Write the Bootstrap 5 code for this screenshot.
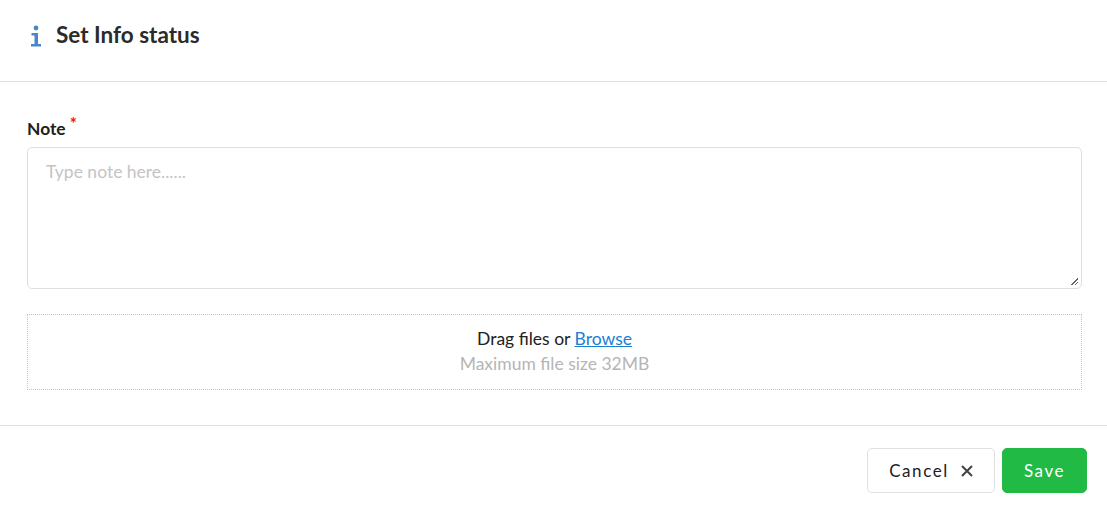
<!DOCTYPE html>
<html lang="en">
<head>
  <meta charset="UTF-8">
  <title>Set Info status</title>
  <link href="https://cdn.jsdelivr.net/npm/bootstrap@5.3.0/dist/css/bootstrap.min.css" rel="stylesheet">
  <style>
    html, body { height: 509px; overflow: hidden; }
    body { font-family: Lato, "Liberation Sans", sans-serif; color: #212121; background: #fff; }
    .dlg-head { height: 82px; padding: 0 27px 10px 30px; border-bottom: 1px solid #e0e0e0; }
    .dlg-head svg { margin-right: 14px; }
    .dlg-title { font-size: 22.5px; font-weight: 700; color: #2b2b2b; line-height: 1; margin: 0; }
    .dlg-body { height: 344px; padding: 36px 25px 0 27px; border-bottom: 1px solid #e0e0e0; }
    .note-label { font-size: 17.4px; font-weight: 700; line-height: 22px; margin: 0 0 7px; display: block; }
    .req-star { color: #f01414; font-size: 17px; position: relative; top: -5px; line-height: 0; }
    .note-input { height: 142px; border: 1px solid #dfdfdf; border-radius: 5px; padding: 13px 18px; font-size: 17.5px; line-height: 22px; color: #212121; display: block; box-shadow: none; }
    .note-input::placeholder { color: #c4c4c4; opacity: 1; }
    .note-input::-webkit-resizer { background: linear-gradient(135deg, transparent 48%, #666 48%, #666 62%, transparent 62%, transparent 72%, #666 72%, #666 84%, transparent 84%) no-repeat 5px 5px / 7px 7px; }
    .drop-zone { height: 76px; margin-top: 25px; border: 1px dotted #c4c4c4; font-size: 17.5px; line-height: 25px; padding-top: 11px; }
    .drop-zone a { color: #1b80d0; }
    .drop-hint { color: #b5b5b5; }
    .dlg-foot { padding: 22px 20px 0 0; gap: 7px; }
    .btn-dlg { height: 45px; border-radius: 5px; font-size: 17px; letter-spacing: 1.55px; line-height: 1; padding: 0; display: flex; align-items: center; justify-content: center; }
    .btn-cancel { width: 128px; border: 1px solid #e0e0e0; color: #212121; background: #fff; gap: 12px; }
    .btn-save { width: 85px; background: #21ba45; border: 1px solid #21ba45; color: #fff; }
  </style>
</head>
<body>

  <div class="dlg-head d-flex align-items-center">
    <svg width="12" height="22" viewBox="0 0 12 22" fill="#4a86c8"><circle cx="6" cy="3" r="2.4"/><path d="M1.500 8h6.500v11h3v2.500H1v-2.500h3.500v-8.500h-3z"/></svg>
    <h1 class="dlg-title">Set Info status</h1>
  </div>

  <div class="dlg-body">
    <label class="note-label" for="note">Note <span class="req-star">*</span></label>
    <textarea id="note" class="form-control note-input" placeholder="Type note here......"></textarea>
    <div class="drop-zone text-center">
      <div>Drag files or <a href="#">Browse</a></div>
      <div class="drop-hint">Maximum file size 32MB</div>
    </div>
  </div>

  <div class="dlg-foot d-flex justify-content-end">
    <button type="button" class="btn btn-dlg btn-cancel">Cancel
      <svg width="12" height="12" viewBox="0 0 12 12" stroke="#424242" stroke-width="2" fill="none"><path d="M1 1l10 10M11 1L1 11"/></svg>
    </button>
    <button type="button" class="btn btn-dlg btn-save">Save</button>
  </div>

  <script src="https://cdn.jsdelivr.net/npm/bootstrap@5.3.0/dist/js/bootstrap.bundle.min.js"></script>
</body>
</html>
